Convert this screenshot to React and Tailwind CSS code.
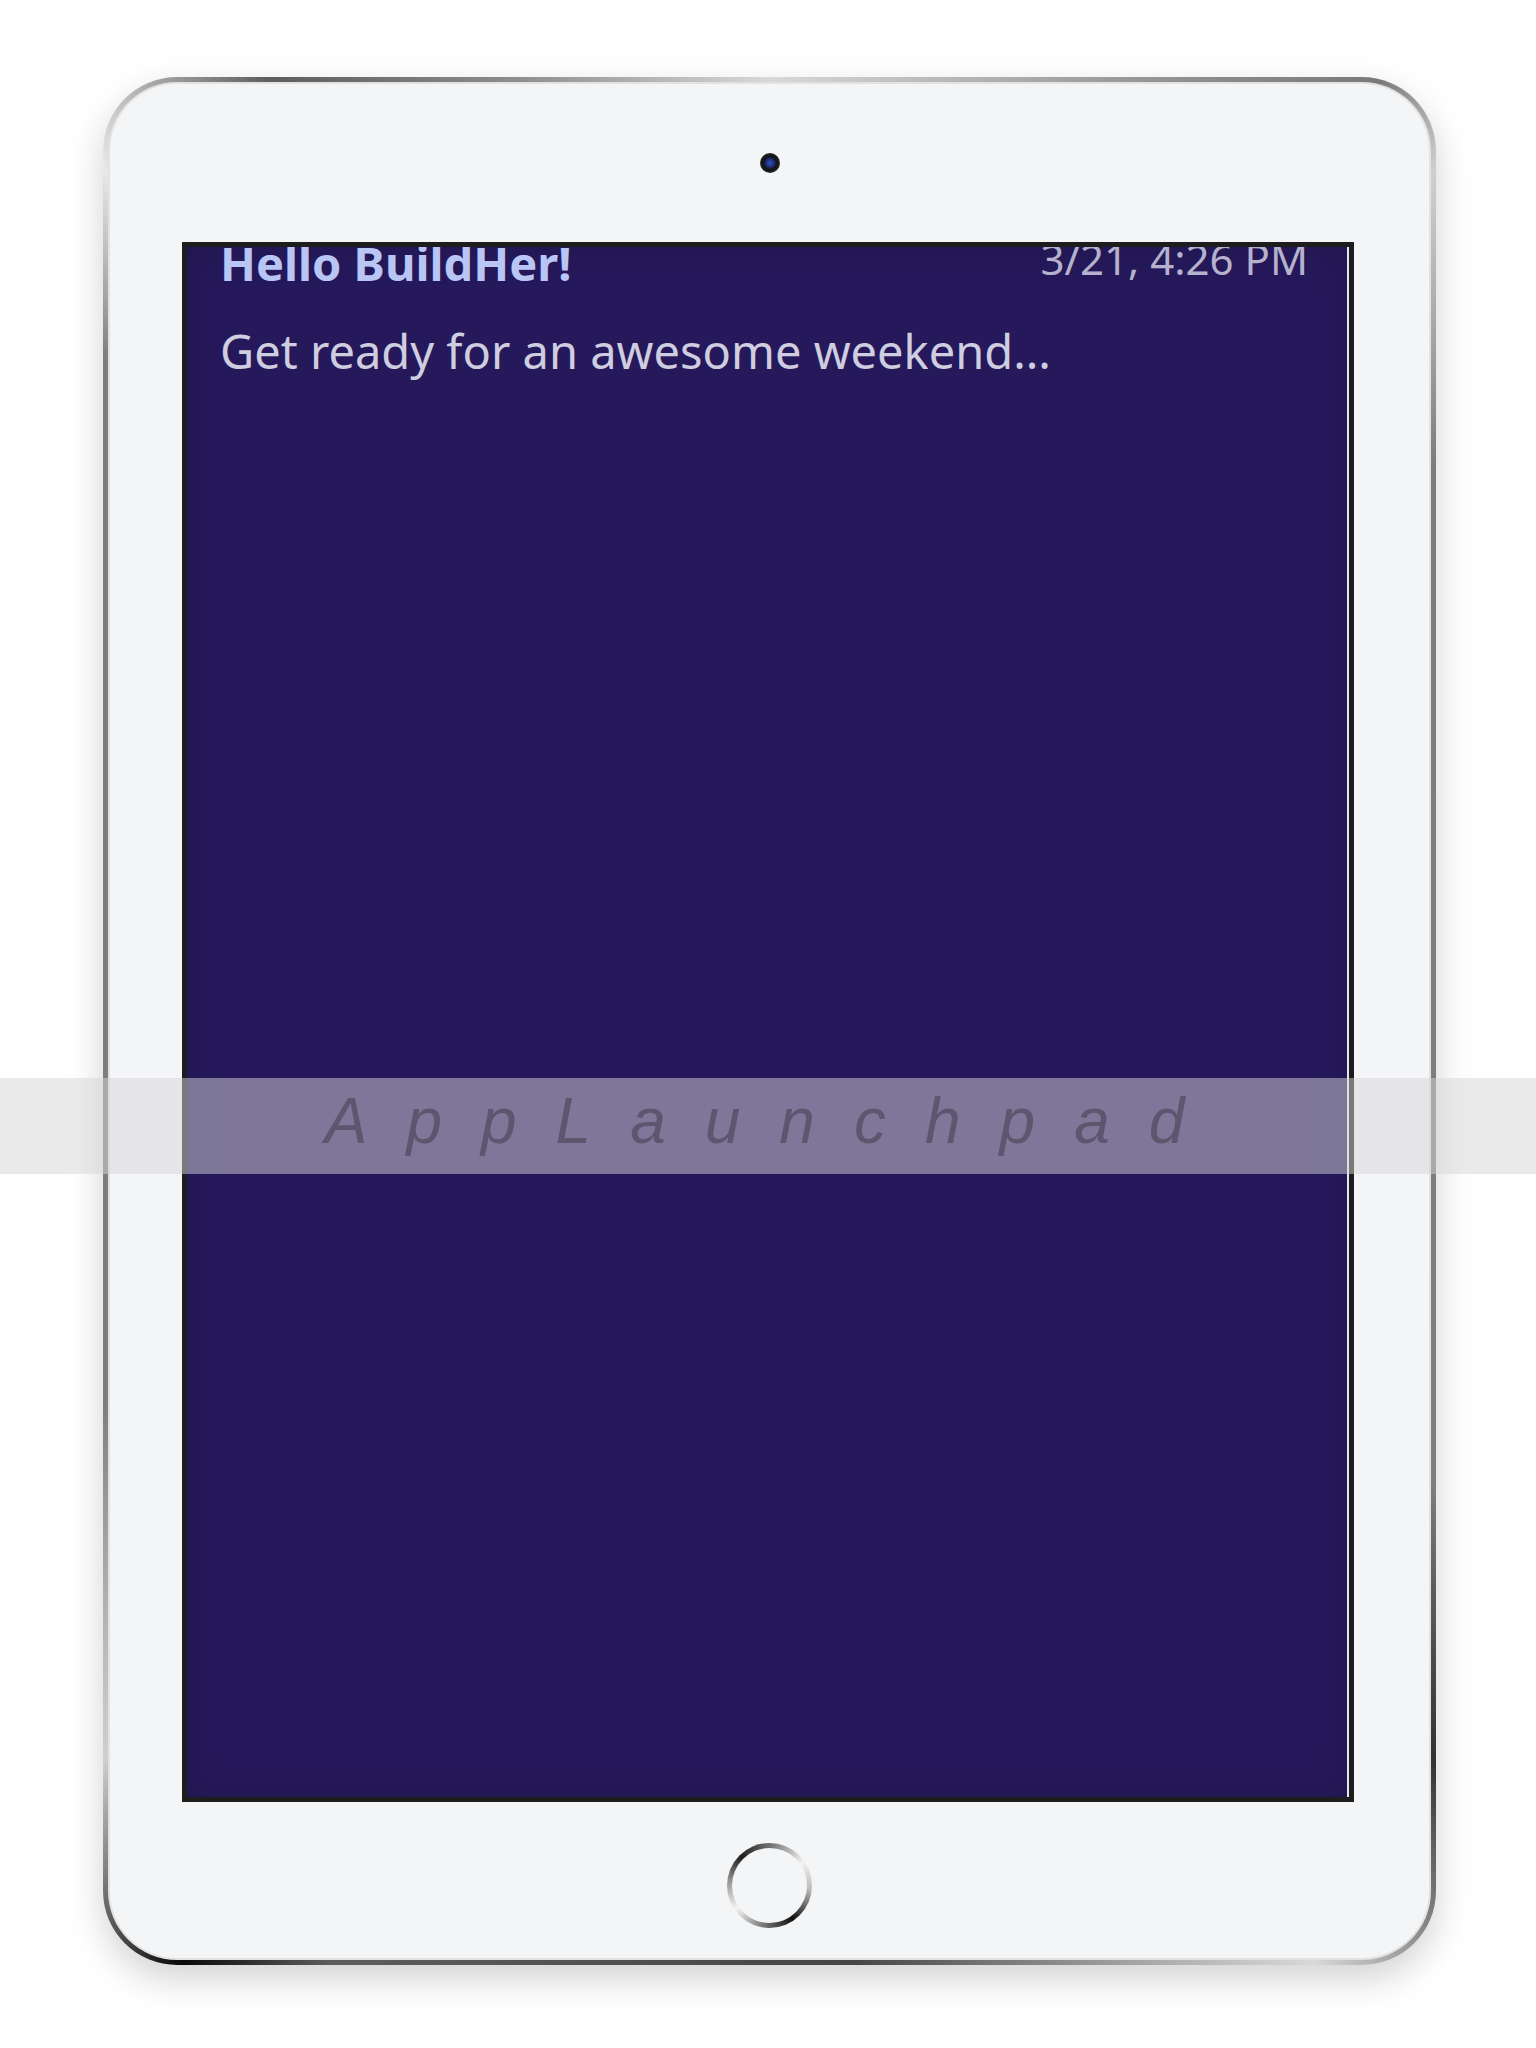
import React from "react";

export default function App() {
  const banner = "AppLaunchpad";
  return (
    <div className="relative w-[1536px] h-[2048px] bg-white overflow-hidden">
      {/* Device */}
      <div className="ml-[103px] mt-[77px] w-[1333px] h-[1888px] rounded-[74px] p-[5px] bg-[conic-gradient(from_0deg,#d8d8d8,#8c8c8c_25deg,#7a7a7a_33deg,#cfcfcf_38deg,#7c7c7c_50deg,#7e7e7e_125deg,#333_138deg,#d8d8d8_150deg,#444_175deg,#5e5e5e_205deg,#0a0a0a_212deg,#cfcfcf_222deg,#7e7e7e_240deg,#7e7e7e_315deg,#e8e8e8_322deg,#5e5e5e_332deg,#8e8e8e_345deg,#d8d8d8)] shadow-[0_14px_36px_rgba(0,0,0,0.18)]">
        <div className="w-full h-full rounded-[69px] p-[2px] bg-[#e2e2e2]">
          <div className="w-full h-full rounded-[67px] bg-[#f4f5f7] flex flex-col items-center">
            {/* Camera */}
            <div className="mt-[69px] w-[20px] h-[20px] rounded-full bg-[radial-gradient(circle,#2d55c0_0,#1c2d78_28%,#121212_48%,#2a2a2a_75%,#8a8a8a_100%)]" />
            {/* Screen */}
            <div className="mt-[69px] self-start ml-[72px] w-[1172px] h-[1560px] border-[5px] border-[#1d1d1d] bg-[#26195b] overflow-hidden shadow-[inset_-2px_0_0_#e6e6ee,inset_0_0_40px_rgba(0,0,0,0.14)]">
              <div className="pl-[33px] pr-[41px]">
                <div className="flex items-start justify-between -mt-[7px]">
                  <div className="font-['Noto_Sans',sans-serif] font-bold text-[47px] leading-none text-[#b8c5f5]">
                    Hello BuildHer!
                  </div>
                  <div className="-mt-[2px] font-['Noto_Sans',sans-serif] text-[42px] leading-none text-[#b6b2cd]">
                    3/21, 4:26 PM
                  </div>
                </div>
                <div className="mt-[41px] font-['Noto_Sans',sans-serif] text-[47px] leading-none text-[#cfcde0]">
                  Get ready for an awesome weekend...
                </div>
              </div>
            </div>
            {/* Home button */}
            <div className="mt-[41px] w-[85px] h-[85px] rounded-full p-[5px] bg-[conic-gradient(from_-45deg,#1e1e1e_0deg,#7a7a7a_50deg,#f2f2f2_100deg,#bdbdbd_140deg,#111_190deg,#6e6e6e_230deg,#f4f4f4_280deg,#9a9a9a_320deg,#1e1e1e_360deg)]">
              <div className="w-full h-full rounded-full bg-[#f4f5f7]" />
            </div>
          </div>
        </div>
      </div>

      {/* Overlay banner */}
      <div className="absolute left-0 top-[1078px] w-full h-[96px] bg-[rgba(213,214,216,0.5)] text-center">
        <span className="inline-block pl-[12px] font-['Liberation_Sans',Arial,sans-serif] italic text-[64px] leading-[86px] tracking-[39px] text-[#5d566f]">
          {banner}
        </span>
      </div>
    </div>
  );
}
